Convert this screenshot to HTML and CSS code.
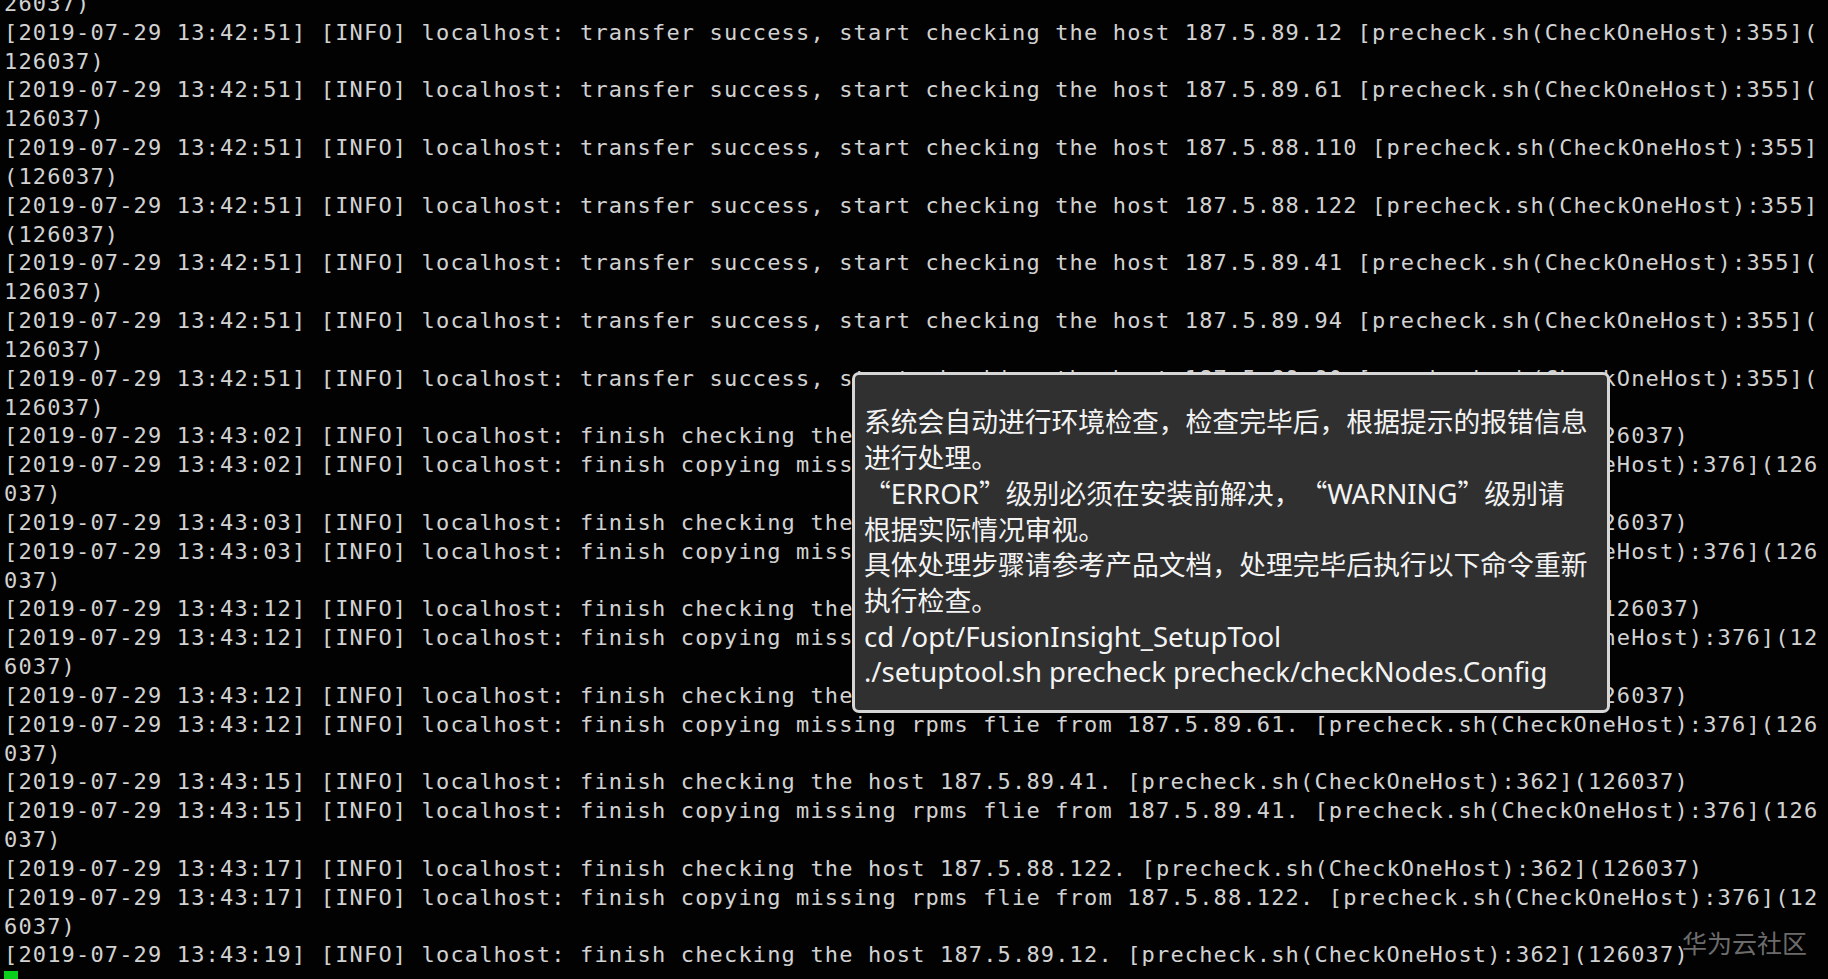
FILE: index.html
```html
<!DOCTYPE html>
<html lang="zh-CN">
<head>
  <meta charset="UTF-8">
  <meta name="viewport" content="width=device-width, initial-scale=1.0">
  <title>precheck</title>
  <link rel="stylesheet" href="styles.css">
</head>
<body>
<div class="screen">
<pre class="term">26037)
[2019-07-29 13:42:51] [INFO] localhost: transfer success, start checking the host 187.5.89.12 [precheck.sh(CheckOneHost):355](
126037)
[2019-07-29 13:42:51] [INFO] localhost: transfer success, start checking the host 187.5.89.61 [precheck.sh(CheckOneHost):355](
126037)
[2019-07-29 13:42:51] [INFO] localhost: transfer success, start checking the host 187.5.88.110 [precheck.sh(CheckOneHost):355]
(126037)
[2019-07-29 13:42:51] [INFO] localhost: transfer success, start checking the host 187.5.88.122 [precheck.sh(CheckOneHost):355]
(126037)
[2019-07-29 13:42:51] [INFO] localhost: transfer success, start checking the host 187.5.89.41 [precheck.sh(CheckOneHost):355](
126037)
[2019-07-29 13:42:51] [INFO] localhost: transfer success, start checking the host 187.5.89.94 [precheck.sh(CheckOneHost):355](
126037)
[2019-07-29 13:42:51] [INFO] localhost: transfer success, start checking the host 187.5.89.90 [precheck.sh(CheckOneHost):355](
126037)
[2019-07-29 13:43:02] [INFO] localhost: finish checking the host 187.5.89.94. [precheck.sh(CheckOneHost):362](126037)
[2019-07-29 13:43:02] [INFO] localhost: finish copying missing rpms flie from 187.5.89.94. [precheck.sh(CheckOneHost):376](126
037)
[2019-07-29 13:43:03] [INFO] localhost: finish checking the host 187.5.89.90. [precheck.sh(CheckOneHost):362](126037)
[2019-07-29 13:43:03] [INFO] localhost: finish copying missing rpms flie from 187.5.89.90. [precheck.sh(CheckOneHost):376](126
037)
[2019-07-29 13:43:12] [INFO] localhost: finish checking the host 187.5.88.110. [precheck.sh(CheckOneHost):362](126037)
[2019-07-29 13:43:12] [INFO] localhost: finish copying missing rpms flie from 187.5.88.110. [precheck.sh(CheckOneHost):376](12
6037)
[2019-07-29 13:43:12] [INFO] localhost: finish checking the host 187.5.89.61. [precheck.sh(CheckOneHost):362](126037)
[2019-07-29 13:43:12] [INFO] localhost: finish copying missing rpms flie from 187.5.89.61. [precheck.sh(CheckOneHost):376](126
037)
[2019-07-29 13:43:15] [INFO] localhost: finish checking the host 187.5.89.41. [precheck.sh(CheckOneHost):362](126037)
[2019-07-29 13:43:15] [INFO] localhost: finish copying missing rpms flie from 187.5.89.41. [precheck.sh(CheckOneHost):376](126
037)
[2019-07-29 13:43:17] [INFO] localhost: finish checking the host 187.5.88.122. [precheck.sh(CheckOneHost):362](126037)
[2019-07-29 13:43:17] [INFO] localhost: finish copying missing rpms flie from 187.5.88.122. [precheck.sh(CheckOneHost):376](12
6037)
[2019-07-29 13:43:19] [INFO] localhost: finish checking the host 187.5.89.12. [precheck.sh(CheckOneHost):362](126037)
<span class="cursor"></span></pre>

  <div class="tip">
    系统会自动进行环境检查，检查完毕后，根据提示的报错信息<br>
    进行处理。<br>
    <span class="q ql">“</span><span class="en">ERROR</span><span class="q qr">”</span>级别必须在安装前解决，<span class="q ql">“</span><span class="en">WARNING</span><span class="q qr">”</span>级别请<br>
    根据实际情况审视。<br>
    具体处理步骤请参考产品文档，处理完毕后执行以下命令重新<br>
    执行检查。<br>
    <span class="en">cd /opt/FusionInsight_SetupTool</span><br>
    <span class="en">./setuptool.sh precheck precheck/checkNodes.Config</span>
  </div>

  <div class="mark">华为云社区</div>
</div>
</body>
</html>
```

FILE: styles.css
```css
* {
  box-sizing: border-box;
  margin: 0;
  padding: 0;
}

html, body {
  background: #020202;
  overflow: hidden;
}

.screen {
  position: relative;
  width: 1828px;
  height: 979px;
  overflow: hidden;
}

.term {
  margin-top: -10px;
  padding-left: 4px;
  font-family: 'DejaVu Sans Mono', 'Liberation Mono', monospace;
  font-size: 22px;
  letter-spacing: 1.155px;
  line-height: 28.83px;
  color: #d2d2d2;
  white-space: pre;
}

.cursor {
  display: inline-block;
  width: 14px;
  height: 26px;
  margin-top: 1px;
  vertical-align: top;
  background: #0bd01b;
}

/* popup over the terminal */
.tip {
  position: absolute;
  left: 852px;
  top: 372px;
  width: 758px;
  height: 341px;
  padding: 29px 0 0 9px;
  background: #303030;
  border: 3px solid #d6d6d6;
  border-radius: 7px;
  color: #f3f3f3;
  font-family: 'Noto Sans', 'Noto Sans CJK SC', sans-serif;
  font-size: 26.8px;
  line-height: 35.6px;
  white-space: nowrap;
}

.tip .en {
  font-size: 27.5px;
}

/* full-width quotes like the CJK UI font */
.tip .q {
  display: inline-block;
  width: 1em;
  font-family: 'Noto Sans CJK SC', sans-serif;
}

.tip .ql {
  text-align: right;
}

.tip .qr {
  text-align: left;
}

.mark {
  position: absolute;
  left: 1682px;
  top: 924px;
  font-family: 'Noto Sans CJK SC', sans-serif;
  font-size: 25px;
  color: rgba(200, 200, 200, 0.55);
}
```
